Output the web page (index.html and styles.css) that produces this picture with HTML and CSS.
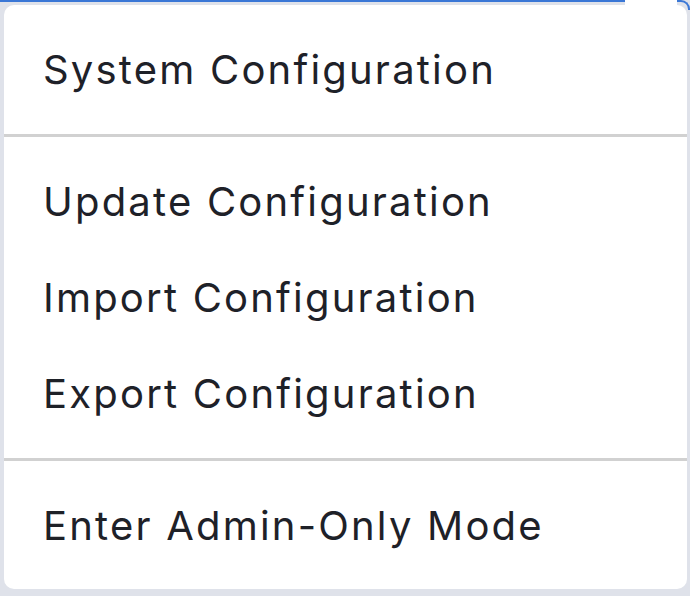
FILE: index.html
```html
<!DOCTYPE html>
<html lang="en">
<head>
  <meta charset="UTF-8">
  <meta name="viewport" content="width=device-width, initial-scale=1.0">
  <title>Settings Menu</title>
  <link rel="stylesheet" href="styles.css">
</head>
<body>

  <div class="dropdown">
    <div class="trigger-edge trigger-edge-left"></div>
    <div class="trigger-tab"></div>
    <div class="trigger-edge trigger-edge-right"></div>

    <div class="menu">
      <div class="menu-group">
        <div class="menu-item">System Configuration</div>
      </div>
      <div class="menu-group">
        <div class="menu-item">Update Configuration</div>
        <div class="menu-item">Import Configuration</div>
        <div class="menu-item">Export Configuration</div>
      </div>
      <div class="menu-group">
        <div class="menu-item">Enter Admin-Only Mode</div>
      </div>
    </div>
  </div>

</body>
</html>
```
FILE: styles.css
```css
body {
  margin: 0;
  font-family: Inter, "Open Sans", sans-serif;
  background-color: #dfe2ea;
  overflow: hidden;
}

.dropdown {
  position: relative;
  width: 690px;
  height: 596px;
  padding: 5px 3px 0 4px;
  box-sizing: border-box;
}

/* bottom edge of the button the menu hangs from */
.trigger-edge {
  position: absolute;
  top: 0;
  border-top: 2px solid #3a77d6;
}

.trigger-edge-left {
  left: 0;
  width: 625px;
}

.trigger-edge-right {
  left: 677px;
  width: 11px;
  height: 8px;
  border-right: 2px solid #3a77d6;
  border-top-right-radius: 9px;
}

.trigger-tab {
  position: absolute;
  top: 0;
  left: 625px;
  width: 52px;
  height: 8px;
  background-color: #fff;
}

.menu {
  background-color: #fff;
  border-radius: 10px;
  height: 584px;
  overflow: hidden;
}

.menu-group {
  padding: 17px 0 16px;
}

.menu-group + .menu-group {
  border-top: 3px solid #d1d1d1;
}

.menu-item {
  height: 96px;
  line-height: 96px;
  padding: 0 39px;
  font-size: 40px;
  letter-spacing: 2.2px;
  color: #1e2128;
  white-space: nowrap;
  cursor: pointer;
}
```
